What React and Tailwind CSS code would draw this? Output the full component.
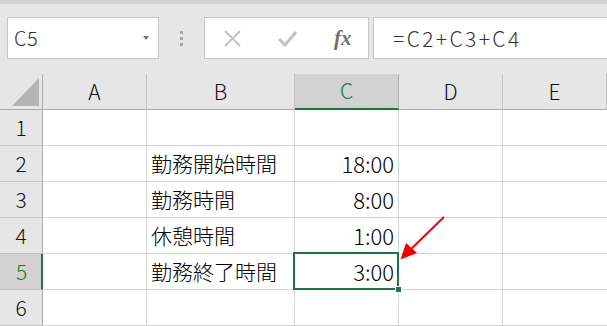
import React from "react";

const font = "font-['Noto_Sans_CJK_JP','Noto_Sans',sans-serif] font-light";

const cols = ["A", "B", "C", "D", "E"];

const rows = [
  { n: 1, b: "", c: "" },
  { n: 2, b: "勤務開始時間", c: "18:00" },
  { n: 3, b: "勤務時間", c: "8:00" },
  { n: 4, b: "休憩時間", c: "1:00" },
  { n: 5, b: "勤務終了時間", c: "3:00" },
  { n: 6, b: "", c: "" },
];

function Toolbar() {
  return (
    <div className="h-[74px] bg-[#e6e6e6]">
      <div className="h-[4px] bg-[#d3d3d3]" />
      <div className="flex pt-[13px]">
        <div className="ml-[7px] w-[152px] h-[42px] bg-white border border-[#c6c6c6] flex items-center justify-between pl-[6px] pr-[9px]">
          <span className="text-[20px] text-[#333] leading-none tracking-[0.5px]">C5</span>
          <span className="w-0 h-0 border-l-[3.5px] border-r-[3.5px] border-t-[4px] border-l-transparent border-r-transparent border-t-[#777]" />
        </div>
        <div className="w-[45px] flex flex-col items-center justify-center gap-[3px]">
          <span className="w-[3px] h-[3px] bg-[#a8a8a8]" />
          <span className="w-[3px] h-[3px] bg-[#a8a8a8]" />
          <span className="w-[3px] h-[3px] bg-[#a8a8a8]" />
        </div>
        <div className="w-[165px] h-[42px] bg-white border border-[#c6c6c6] flex items-center pl-[18px]">
          <svg width="19" height="17" viewBox="0 0 19 17" className="mr-[36px]">
            <path d="M2 1 L17 16 M17 1 L2 16" stroke="#c3c3c3" strokeWidth="2" fill="none" />
          </svg>
          <svg width="19" height="17" viewBox="0 0 19 17" className="mr-[37px]">
            <path d="M1 9 L7 15 L18 2" stroke="#c3c3c3" strokeWidth="3" fill="none" />
          </svg>
          <span className="font-['Liberation_Serif',serif] italic font-bold text-[21px] text-[#6f6f6f] leading-none">
            fx
          </span>
        </div>
        <div className="ml-[4px] flex-1 h-[42px] bg-white border border-r-0 border-[#c6c6c6] flex items-center pl-[19px]">
          <span className="text-[21px] text-[#333] leading-none tracking-[2.4px]">=C2+C3+C4</span>
        </div>
      </div>
    </div>
  );
}

function Sheet() {
  return (
    <div className="relative">
      <div className="grid grid-cols-[43px_104px_148px_104px_104px_104px]">
        <div className="h-[36px] bg-[#e6e6e6] border-r border-b border-[#ababab] relative">
          <svg width="28" height="28" viewBox="0 0 28 28" className="absolute left-[12px] top-[4px]">
            <polygon points="27,0 27,28 0,28" fill="#b4b4b4" />
          </svg>
        </div>
        {cols.map((c) =>
          c === "C" ? (
            <div
              key={c}
              className="h-[36px] bg-[#d2d2d2] border-r border-[#ababab] border-b-2 border-b-[#217346] flex items-center justify-center text-[21px] text-[#217346]"
            >
              {c}
            </div>
          ) : (
            <div
              key={c}
              className="h-[36px] bg-[#e6e6e6] border-r border-b border-r-[#c4c4c4] border-b-[#ababab] flex items-center justify-center text-[21px] text-[#111]"
            >
              {c}
            </div>
          )
        )}
        {rows.map((r) => (
          <React.Fragment key={r.n}>
            {r.n === 5 ? (
              <div className="h-[36px] bg-[#d2d2d2] border-r-2 border-r-[#217346] border-b border-b-[#c4c4c4] flex items-center justify-center pl-[2px] text-[21px] text-[#217346]">
                {r.n}
              </div>
            ) : (
              <div className="h-[36px] bg-[#e6e6e6] border-r border-b border-r-[#ababab] border-b-[#c4c4c4] flex items-center justify-center text-[21px] text-[#111]">
                {r.n}
              </div>
            )}
            <div className="h-[36px] bg-white border-r border-b border-[#d4d4d4]" />
            <div className="h-[36px] bg-white border-r border-b border-[#d4d4d4] flex items-center pl-[4px] text-[21px] text-[#000] whitespace-nowrap">
              {r.b}
            </div>
            <div className="h-[36px] bg-white border-r border-b border-[#d4d4d4] flex items-center justify-end pr-[4px] text-[22px] text-[#000]">
              {r.c}
            </div>
            <div className="h-[36px] bg-white border-r border-b border-[#d4d4d4]" />
            <div className="h-[36px] bg-white border-b border-[#d4d4d4]" />
          </React.Fragment>
        ))}
      </div>
      <div className="absolute left-[293px] top-[178px] w-[106px] h-[38px] border-2 border-[#217346] pointer-events-none" />
      <div className="absolute left-[395px] top-[212px] w-[7px] h-[7px] bg-[#217346] border border-white" />
      <svg
        width="607"
        height="252"
        viewBox="0 74 607 252"
        className="absolute left-0 top-0 pointer-events-none"
      >
        <line x1="444" y1="217" x2="408" y2="252" stroke="#f00000" strokeWidth="2" />
        <polygon points="400.5,259.5 406,243 417,253" fill="#f00000" />
      </svg>
    </div>
  );
}

export default function App() {
  return (
    <div className={`w-[607px] h-[326px] overflow-hidden bg-white ${font}`}>
      <Toolbar />
      <Sheet />
    </div>
  );
}
